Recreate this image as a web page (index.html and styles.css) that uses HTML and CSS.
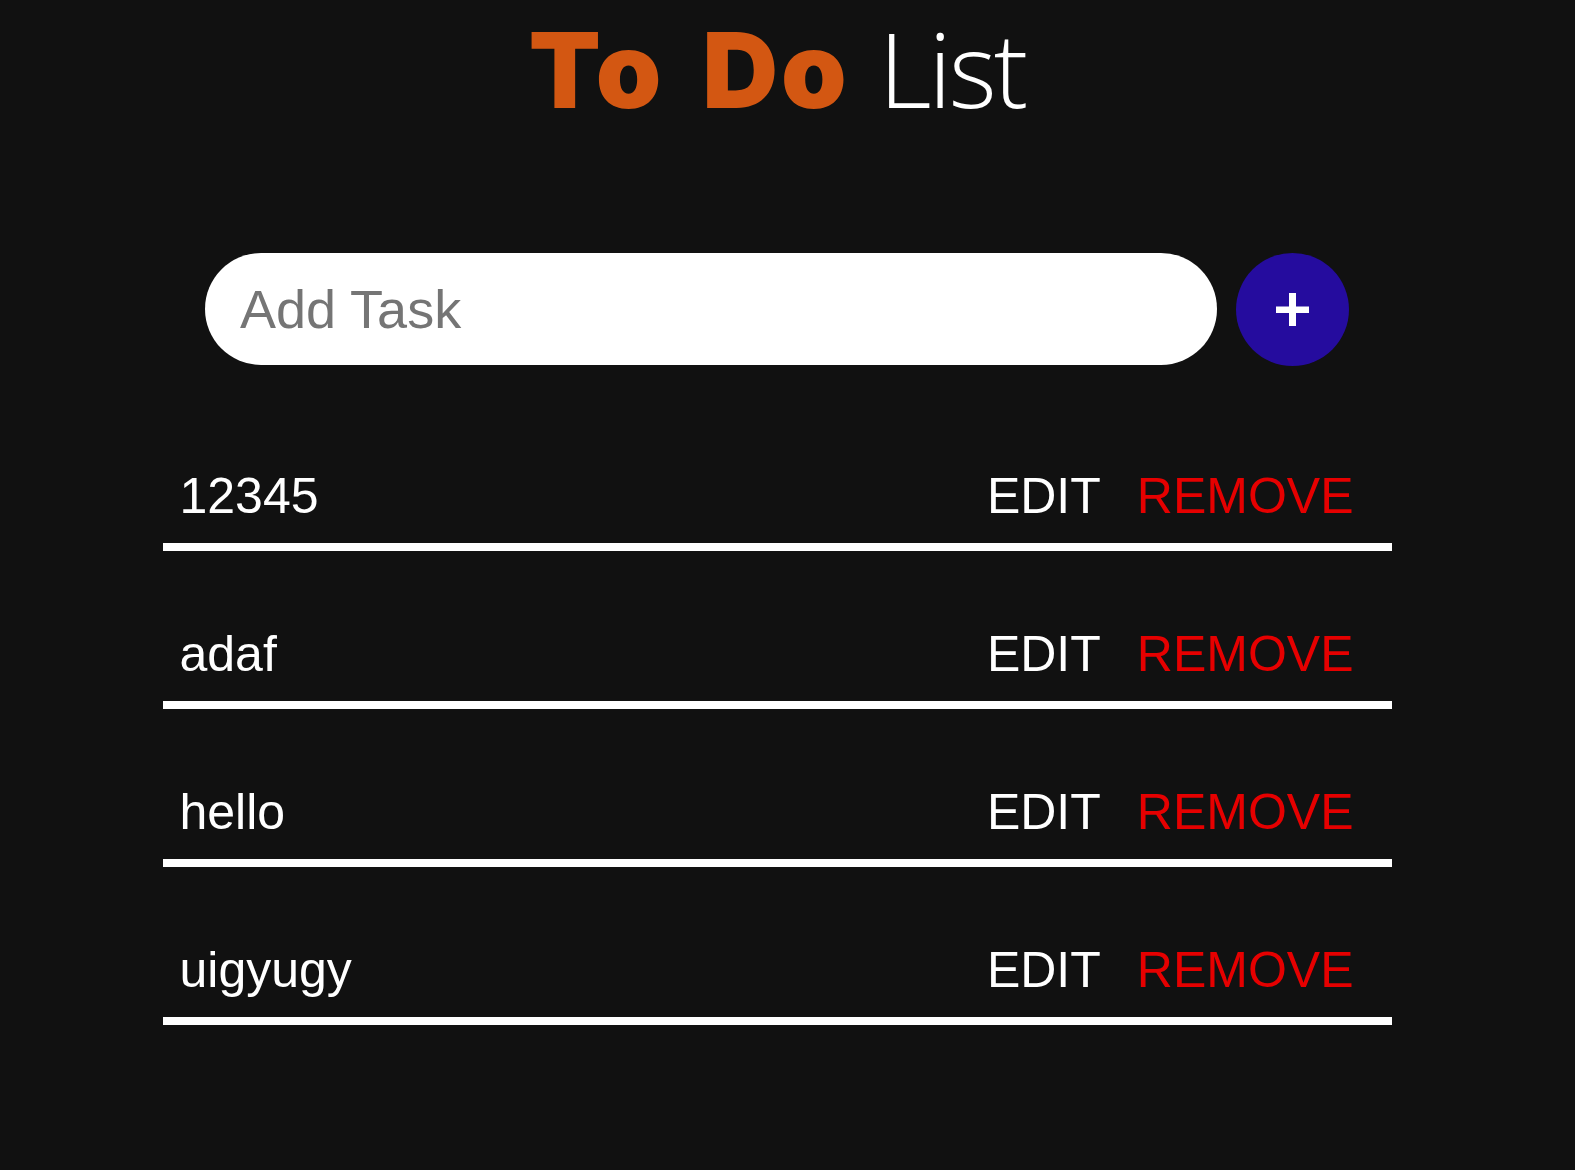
FILE: index.html
```html
<!DOCTYPE html>
<html lang="en">
<head>
<meta charset="utf-8">
<title>To Do List</title>
<link rel="stylesheet" href="styles.css">
</head>
<body>
<main class="app">
  <h1 class="title"><span class="title-strong">To Do</span> <span class="title-light">List</span></h1>
  <form class="add-form">
    <input class="add-input" type="text" placeholder="Add Task">
    <button class="add-btn" type="button" aria-label="Add task">
      <svg class="plus" width="33" height="33" viewBox="0 0 33 33"><rect x="0" y="13.5" width="33" height="6.5" fill="#fff"/><rect x="13" y="0" width="7" height="33" fill="#fff"/></svg>
    </button>
  </form>
  <ul class="tasks">
    <li class="task"><span class="task-text">12345</span><div class="actions"><button class="act edit" type="button">EDIT</button><button class="act remove" type="button">REMOVE</button></div></li>
    <li class="task"><span class="task-text">adaf</span><div class="actions"><button class="act edit" type="button">EDIT</button><button class="act remove" type="button">REMOVE</button></div></li>
    <li class="task"><span class="task-text">hello</span><div class="actions"><button class="act edit" type="button">EDIT</button><button class="act remove" type="button">REMOVE</button></div></li>
    <li class="task"><span class="task-text">uigyugy</span><div class="actions"><button class="act edit" type="button">EDIT</button><button class="act remove" type="button">REMOVE</button></div></li>
  </ul>
</main>
</body>
</html>
```
FILE: styles.css
```css
html, body {
  margin: 0;
  background: #111111;
}
body {
  padding-right: 21px;
  font-family: "Liberation Sans", Arial, sans-serif;
  color: #ffffff;
}
.app {
  width: 1229px;
  margin: 0 auto;
}
.title {
  margin: 0;
  padding-top: 8px;
  font-size: 104px;
  line-height: 120px;
  text-align: center;
  font-weight: normal;
  white-space: nowrap;
}
.title-strong {
  font-family: "Inter", sans-serif;
  font-weight: 900;
  font-size: 105px;
  letter-spacing: 3px;
  word-spacing: 14px;
  color: #d35712;
}
.title-light {
  font-family: "Open Sans", sans-serif;
  font-weight: 300;
  font-size: 103px;
  letter-spacing: -3px;
  color: #ffffff;
}
.add-form {
  display: flex;
  gap: 19px;
  width: 1144px;
  margin: 121px auto 0;
}
.add-input {
  flex: 1;
  height: 112px;
  box-sizing: border-box;
  border: none;
  border-radius: 56px;
  padding: 0 35px;
  background: #ffffff;
  font-family: "Liberation Sans", Arial, sans-serif;
  font-size: 54px;
  color: #111;
  outline: none;
}
.add-input::placeholder {
  color: #757575;
}
.add-btn {
  width: 113px;
  height: 113px;
  flex: none;
  border: none;
  border-radius: 50%;
  background: #250c9e;
  display: flex;
  align-items: center;
  justify-content: center;
  padding: 0;
  cursor: pointer;
}
.tasks {
  list-style: none;
  margin: 82px 0 0;
  padding: 0;
}
.task {
  display: flex;
  align-items: center;
  justify-content: space-between;
  padding: 19px 38px 18px 17px;
  border-bottom: 8px solid #ffffff;
  margin-bottom: 55px;
  font-size: 50px;
  line-height: 58px;
}
.actions {
  display: flex;
  gap: 36px;
}
.act {
  background: none;
  border: none;
  padding: 0;
  font-family: "Liberation Sans", Arial, sans-serif;
  font-size: 50px;
  line-height: 58px;
  cursor: pointer;
}
.edit {
  color: #ffffff;
}
.remove {
  color: #e60000;
}
```
